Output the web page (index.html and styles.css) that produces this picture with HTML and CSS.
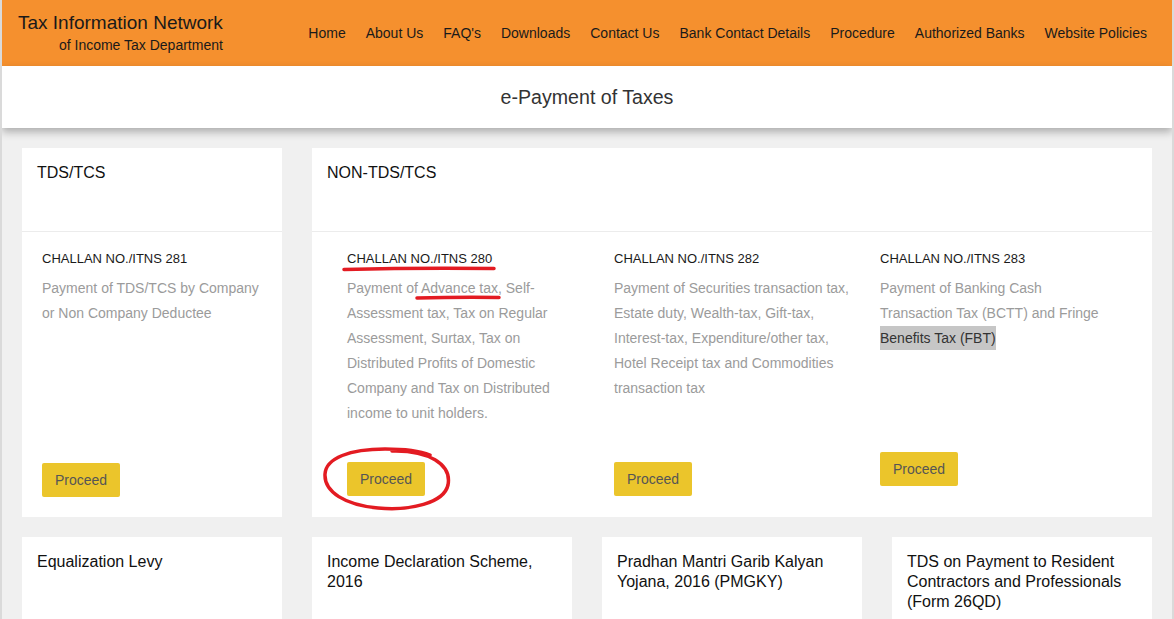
FILE: index.html
```html
<!DOCTYPE html>
<html lang="en">
<head>
<meta charset="utf-8">
<title>e-Payment of Taxes</title>
<link rel="stylesheet" href="styles.css">
</head>
<body>
<div class="page">
  <header class="topbar">
    <div class="brand">
      <div class="brand-title">Tax Information Network</div>
      <div class="brand-sub">of Income Tax Department</div>
    </div>
    <nav class="nav">
      <a href="#">Home</a>
      <a href="#">About Us</a>
      <a href="#">FAQ's</a>
      <a href="#">Downloads</a>
      <a href="#">Contact Us</a>
      <a href="#">Bank Contact Details</a>
      <a href="#">Procedure</a>
      <a href="#">Authorized Banks</a>
      <a href="#">Website Policies</a>
    </nav>
  </header>

  <div class="banner"><h1>e-Payment of Taxes</h1></div>

  <main class="grid">
    <section class="card">
      <div class="card-head">TDS/TCS</div>
      <div class="card-body card-body-single">
        <div class="challan">
          <div class="challan-no">CHALLAN NO./ITNS 281</div>
          <p class="desc">Payment of TDS/TCS by Company or Non Company Deductee</p>
          <button class="btn">Proceed</button>
        </div>
      </div>
    </section>

    <section class="card card-wide">
      <div class="card-head">NON-TDS/TCS</div>
      <div class="card-body card-body-multi">
        <div class="challan">
          <div class="challan-no">CHALLAN NO./ITNS 280</div>
          <p class="desc">Payment of Advance tax, Self-Assessment tax, Tax on Regular Assessment, Surtax, Tax on Distributed Profits of Domestic Company and Tax on Distributed income to unit holders.</p>
          <button class="btn">Proceed</button>
        </div>
        <div class="challan">
          <div class="challan-no">CHALLAN NO./ITNS 282</div>
          <p class="desc">Payment of Securities transaction tax, Estate duty, Wealth-tax, Gift-tax, Interest-tax, Expenditure/other tax, Hotel Receipt tax and Commodities transaction tax</p>
          <button class="btn">Proceed</button>
        </div>
        <div class="challan challan-short">
          <div class="challan-no">CHALLAN NO./ITNS 283</div>
          <p class="desc">Payment of Banking Cash Transaction Tax (BCTT) and Fringe <span class="hl">Benefits Tax (FBT)</span></p>
          <button class="btn">Proceed</button>
        </div>
      </div>
    </section>

    <section class="card card-small"><div class="small-title">Equalization Levy</div></section>
    <section class="card card-small"><div class="small-title">Income Declaration Scheme, 2016</div></section>
    <section class="card card-small"><div class="small-title">Pradhan Mantri Garib Kalyan Yojana, 2016 (PMGKY)</div></section>
    <section class="card card-small"><div class="small-title">TDS on Payment to Resident Contractors and Professionals (Form 26QD)</div></section>
  </main>

  <svg class="annot" viewBox="2 0 1170 619" width="1170" height="619" aria-hidden="true">
    <path d="M 344 269.5 Q 420 267.5 494 268.5" />
    <path d="M 417 298 Q 458 297 499 297.5" />
    <path d="M 392 451 C 428 450 452 464 448 485 C 444 503 410 511 378 508 C 345 505 324 492 325 474 C 326 458 350 449 385 449 C 405 449 420 451 430 455" />
  </svg>
</div>
</body>
</html>
```

FILE: styles.css
```css
* { box-sizing: border-box; }

html, body {
  margin: 0;
  padding: 0;
  overflow: hidden;
}

body {
  background: #dadada;
  font-family: "Liberation Sans", Arial, sans-serif;
  color: #1a1a1a;
}

.page {
  position: relative;
  margin: 0 2px;
  height: 619px;
  overflow: hidden;
  background: #f0f0f0;
}

/* Header */
.topbar {
  display: flex;
  justify-content: space-between;
  align-items: center;
  height: 66px;
  padding: 0 25px 0 16px;
  background: #f5902e;
}

.brand {
  align-self: flex-start;
  padding-top: 12px;
  text-align: right;
  color: #1a1a1a;
}

.brand-title {
  font-size: 19px;
  line-height: 22px;
}

.brand-sub {
  margin-top: 3px;
  font-size: 14px;
  line-height: 16px;
}

.nav {
  display: flex;
  gap: 20px;
}

.nav a {
  color: #1a1a1a;
  text-decoration: none;
  font-size: 14px;
  line-height: 16px;
}

/* Banner */
.banner {
  position: relative;
  z-index: 1;
  display: flex;
  align-items: center;
  justify-content: center;
  height: 62px;
  background: #fff;
  box-shadow: 0 4px 8px rgba(0, 0, 0, 0.28);
}

.banner h1 {
  margin: 0;
  font-size: 19.6px;
  font-weight: normal;
  color: #333;
}

/* Grid */
.grid {
  display: grid;
  grid-template-columns: repeat(4, 260px);
  column-gap: 30px;
  row-gap: 20px;
  padding: 20px 20px 0;
}

.card {
  background: #fff;
}

.card-wide {
  grid-column: span 3;
}

.card-head {
  height: 84px;
  padding: 16px 15px;
  border-bottom: 1px solid #ececec;
  font-size: 16px;
  line-height: 18px;
  color: #111;
}

.card-body {
  padding-top: 18px;
  padding-bottom: 21px;
}

.card-body-single {
  padding-left: 20px;
  padding-right: 20px;
  padding-bottom: 20px;
}

.card-body-single .btn {
  margin-top: 37px;
}

.card-body-multi {
  display: grid;
  grid-template-columns: repeat(3, 267px);
  padding-left: 15px;
}

.card-body-multi .challan {
  padding: 0 10px 0 20px;
}

.card-body-multi .challan-short {
  padding-left: 19px;
}

.challan-no {
  font-size: 13px;
  line-height: 18px;
  color: #1a1a1a;
}

.desc {
  margin: 8px 0 0;
  min-height: 150px;
  font-size: 14px;
  line-height: 25px;
  color: #9b9b9b;
}

.challan-short .desc {
  min-height: 140px;
}

.hl {
  padding: 4px 0;
  background: #c6c6c6;
  color: #333;
}

.btn {
  display: block;
  margin-top: 36px;
  height: 34px;
  padding: 0 13px;
  border: none;
  border-radius: 2px;
  background: #ebc52b;
  color: #555;
  font-family: "Liberation Sans", Arial, sans-serif;
  font-size: 14px;
  line-height: 34px;
  cursor: pointer;
}

.card-small {
  height: 369px;
  padding: 15px 15px;
}

.small-title {
  font-size: 16px;
  line-height: 20px;
  color: #111;
}

/* Red hand-drawn annotations */
.annot {
  position: absolute;
  left: 0;
  top: 0;
  pointer-events: none;
  z-index: 2;
}

.annot path {
  fill: none;
  stroke: #e31b22;
  stroke-width: 3.5;
  stroke-linecap: round;
  stroke-linejoin: round;
}
```
